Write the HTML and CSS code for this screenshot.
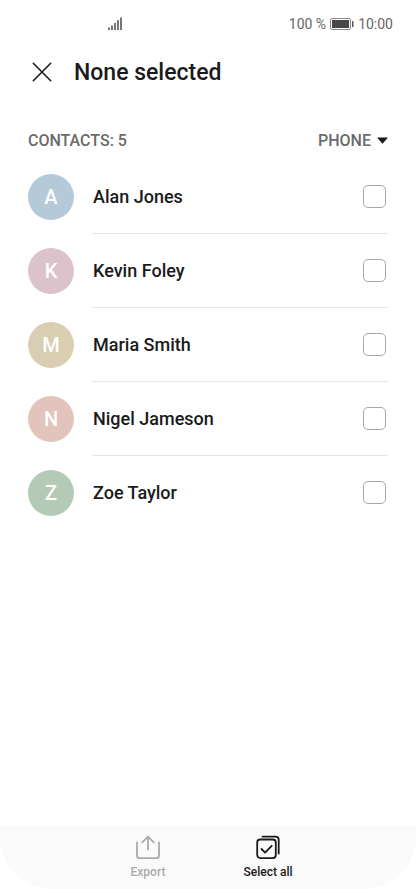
FILE: index.html
```html
<!DOCTYPE html>
<html lang="en">
<head>
<meta charset="utf-8">
<meta name="viewport" content="width=device-width, initial-scale=1">
<title>Contacts</title>
<link rel="stylesheet" href="styles.css">
</head>
<body>
<div class="status">
  <svg class="signal" width="14" height="14" viewBox="0 0 14 14" aria-hidden="true"><path d="M1 10.5V13M4 8.5V13M7 6v7M10 3v10M13 .5V13"/></svg>
  <div class="status-right">
    <span>100 %</span>
    <svg width="24" height="12" viewBox="0 0 24 12" aria-hidden="true"><rect x=".5" y=".5" width="20" height="11" rx="1.5" fill="#fff" stroke="#8a8a8a"/><rect x="2" y="2" width="17" height="8" fill="#484848"/><rect x="22" y="3" width="1.5" height="6" rx=".5" fill="#555"/></svg>
    <span>10:00</span>
  </div>
</div>
<header class="header">
  <button class="close" type="button" aria-label="Close"><svg width="20" height="20" viewBox="0 0 20 20" aria-hidden="true"><path d="M1.3 1.3l17.4 17.4M18.7 1.3L1.3 18.7"/></svg></button>
  <h1>None selected</h1>
</header>
<main class="content">
  <div class="subheader">
    <h2>CONTACTS: 5</h2>
    <div class="source">
      <select aria-label="Source"><option>PHONE</option></select>
      <svg width="11" height="7" viewBox="0 0 11 7" aria-hidden="true"><path d="M1 .5h9q.9 0 .3.7L6 6.2q-.5.5-1 0L.7 1.2Q.1.5 1 .5z"/></svg>
    </div>
  </div>
  <ul class="list">
    <li><span class="avatar blue">A</span><div class="row"><label for="c1">Alan Jones</label><input type="checkbox" id="c1"></div></li>
    <li><span class="avatar pink">K</span><div class="row"><label for="c2">Kevin Foley</label><input type="checkbox" id="c2"></div></li>
    <li><span class="avatar sand">M</span><div class="row"><label for="c3">Maria Smith</label><input type="checkbox" id="c3"></div></li>
    <li><span class="avatar coral">N</span><div class="row"><label for="c4">Nigel Jameson</label><input type="checkbox" id="c4"></div></li>
    <li><span class="avatar green">Z</span><div class="row"><label for="c5">Zoe Taylor</label><input type="checkbox" id="c5"></div></li>
  </ul>
</main>
<footer class="toolbar">
  <button type="button" disabled>
    <svg width="26" height="26" viewBox="0 0 26 26" aria-hidden="true"><path d="M2 8.5v12.7q0 3 3 3h16q3 0 3-3V8.5M13 15.5V3M7.3 8.4L13 2.7l5.7 5.7"/></svg>
    <span>Export</span>
  </button>
  <button type="button">
    <svg width="26" height="26" viewBox="0 0 26 26" aria-hidden="true"><rect x="2.2" y="5.5" width="18.6" height="18.6" rx="3"/><path d="M6.5 15l3.6 3.6 6.6-6.8M7.5 2.7h13q3.2 0 3.2 3.2V19.5"/></svg>
    <span>Select all</span>
  </button>
</footer>
</body>
</html>
```
FILE: styles.css
```css
* {
  box-sizing: border-box;
}

body {
  margin: 0;
  min-height: 100vh;
  display: flex;
  flex-direction: column;
  background: #fff;
  color: #1a1a1a;
  font-family: Roboto, sans-serif;
}

button,
select {
  margin: 0;
  padding: 0;
  border: 0;
  background: none;
  color: inherit;
  font: inherit;
}

svg {
  display: block;
  flex: none;
}

.status {
  display: flex;
  align-items: center;
  justify-content: space-between;
  height: 48px;
  padding: 0 23px 0 108px;
  color: #666;
  font-size: 14px;
}

.signal {
  fill: none;
  stroke: #777;
  stroke-width: 2;
}

.status-right {
  display: flex;
  align-items: center;
  gap: 4px;
}

.header {
  display: flex;
  align-items: center;
  gap: 22px;
  height: 48px;
  padding: 0 32px;
}

.close svg {
  fill: none;
  stroke: #1a1a1a;
  stroke-width: 1.6;
  stroke-linecap: round;
}

h1,
h2 {
  margin: 0;
  font-weight: 500;
}

h1 {
  font-size: 23px;
}

.content {
  flex: 1;
  padding: 24px 28px;
}

.subheader {
  display: flex;
  align-items: center;
  justify-content: space-between;
  height: 40px;
  color: #6b6b6b;
  font-size: 16px;
}

h2 {
  font-size: 16px;
}

.source {
  display: flex;
  align-items: center;
  gap: 6px;
  font-weight: 500;
}

.source select {
  appearance: none;
}

.source svg {
  fill: #1a1a1a;
}

.list {
  margin: 0;
  padding: 0;
  list-style: none;
}

.list li {
  display: flex;
  align-items: center;
  gap: 18px;
}

.avatar {
  display: flex;
  align-items: center;
  justify-content: center;
  flex: none;
  width: 46px;
  height: 46px;
  border-radius: 50%;
  color: #fff;
  font-size: 20px;
  font-weight: 500;
}

.blue { background: #b4cad8; }
.pink { background: #dcc2ca; }
.sand { background: #d9ceb2; }
.coral { background: #e2c4bc; }
.green { background: #b3cbb6; }

.row {
  display: flex;
  align-items: center;
  justify-content: space-between;
  flex: 1;
  height: 74px;
  padding: 0 2px 0 1px;
  border-bottom: 1px solid #e5e5e5;
}

.list li:last-child .row {
  border-bottom-color: transparent;
}

.row label {
  font-size: 18px;
  font-weight: 500;
}

.row input {
  appearance: none;
  width: 23px;
  height: 23px;
  margin: 0;
  border: 1px solid #a8a8a8;
  border-radius: 5px;
}

.row input:checked {
  background: #1a1a1a;
}

.toolbar {
  display: flex;
  justify-content: center;
  height: 64px;
  background: #fafafa;
  border-radius: 0 0 52px 52px;
}

.toolbar button {
  display: flex;
  flex-direction: column;
  align-items: center;
  gap: 4px;
  width: 120px;
  padding-top: 9px;
  font-size: 12px;
  font-weight: 500;
  line-height: 16px;
}

.toolbar button:disabled {
  color: #aaa;
}

.toolbar svg {
  fill: none;
  stroke: currentColor;
  stroke-width: 1.8;
  stroke-linecap: round;
  stroke-linejoin: round;
}
```
